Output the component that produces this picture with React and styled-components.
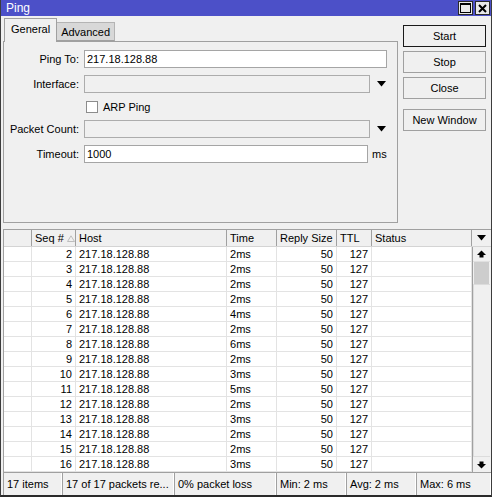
import React from "react";
import styled, { createGlobalStyle } from "styled-components";

const Global = createGlobalStyle`
  html, body { margin: 0; padding: 0; background: #f0f0f0; }
  body { font-family: "Liberation Sans", Arial, sans-serif; font-size: 11px; color: #000; }
  * { box-sizing: border-box; }
`;

const Window = styled.div`
  width: 492px;
  height: 497px;
  background: #f0f0f0;
  border-left: 1px solid #3c3c3c;
  border-right: 1px solid #3c3c3c;
  border-bottom: 2px solid #2a2a2a;
  display: flex;
  flex-direction: column;
  overflow: hidden;
`;

const TitleBar = styled.div`
  height: 16px;
  margin: 0 -1px;
  background: #4c50c8;
  color: #fff;
  font-size: 12px;
  display: flex;
  align-items: center;
  padding-left: 6px;
  padding-right: 2px;
`;

const TitleText = styled.div`
  flex: 1;
`;

const TitleButton = styled.div`
  width: 15px;
  height: 14px;
  margin-left: 2px;
  background: #e8e8e8;
  border: 1px solid #2a2a2a;
  display: flex;
  align-items: center;
  justify-content: center;
`;

const Upper = styled.div`
  display: flex;
  padding-left: 2px;
  margin-top: 2px;
`;

const LeftPart = styled.div`
  width: 395px;
  display: flex;
  flex-direction: column;
`;

const Tabs = styled.div`
  display: flex;
  align-items: flex-end;
  height: 23px;
  padding-left: 1px;
  position: relative;
  z-index: 1;
`;

const Tab = styled.div`
  height: ${(p) => (p.$active ? "24px" : "19px")};
  padding: 0 ${(p) => (p.$active ? "6px" : "4px")};
  background: ${(p) => (p.$active ? "#f0f0f0" : "#d8d8d8")};
  border: 1px solid ${(p) => (p.$active ? "#a0a0a0" : "#b4b4b4")};
  border-bottom: ${(p) => (p.$active ? "none" : "1px solid #a0a0a0")};
  border-left: ${(p) => (p.$active ? "1px solid #a0a0a0" : "none")};
  display: flex;
  align-items: ${(p) => (p.$active ? "flex-start" : "center")};
  padding-top: ${(p) => (p.$active ? "4px" : "0")};
  font-size: 11px;
  margin-bottom: ${(p) => (p.$active ? "-1px" : "0")};
`;

const Panel = styled.div`
  height: 182px;
  border: 1px solid #a0a0a0;
  padding-top: 8px;
  display: flex;
  flex-direction: column;
  gap: 7px;
`;

const FormRow = styled.div`
  display: flex;
  align-items: center;
  height: ${(p) => p.$h || 18}px;
`;

const Label = styled.div`
  width: 76px;
  text-align: right;
  padding-right: 1px;
  margin-right: 4px;
  white-space: nowrap;
`;

const Input = styled.div`
  width: ${(p) => p.$w}px;
  height: 18px;
  background: ${(p) => (p.$disabled ? "#f0f0f0" : "#fff")};
  border: 1px solid ${(p) => (p.$disabled ? "#acacac" : "#a5a5a5")};
  padding-left: 2px;
  display: flex;
  align-items: center;
`;

const DropArrow = styled.div`
  width: 18px;
  display: flex;
  justify-content: center;
  margin-left: 2px;
`;

const Unit = styled.div`
  margin-left: 4px;
`;

const Check = styled.div`
  width: 12px;
  height: 12px;
  background: #fff;
  border: 1px solid #8c8c8c;
  margin-left: 82px;
  margin-right: 5px;
`;

const ButtonCol = styled.div`
  margin-left: 5px;
  margin-top: 7px;
  width: 83px;
  display: flex;
  flex-direction: column;
  gap: 4px;
`;

const Button = styled.div`
  height: 22px;
  border: 1px solid ${(p) => (p.$default ? "#1a1a1a" : "#a0a0a0")};
  background: #f0f0f0;
  display: flex;
  align-items: center;
  justify-content: center;
  font-size: 11px;
  margin-top: ${(p) => p.$mt || 0}px;
`;

const Table = styled.div`
  margin-top: 6px;
  margin-left: 2px;
  display: flex;
  flex-direction: column;
  border-left: 1px solid #a0a0a0;
  border-top: 1px solid #a0a0a0;
`;

const cols = "28px 44px 151px 50px 60px 35px 100px";

const HeaderRow = styled.div`
  display: grid;
  grid-template-columns: ${cols} 18px;
  height: 17px;
  background: #f0f0f0;
  border-bottom: 1px solid #d4d4d4;
`;

const HeadCell = styled.div`
  border-right: 1px solid #a0a0a0;
  padding-left: 3px;
  display: flex;
  align-items: center;
  justify-content: ${(p) => (p.$center ? "center" : "flex-start")};
  white-space: nowrap;
`;

const SortMark = styled.svg`
  margin-left: 3px;
`;

const Body = styled.div`
  display: flex;
  height: 225px;
`;

const Rows = styled.div`
  width: 468px;
  background: #fff;
  display: flex;
  flex-direction: column;
`;

const Row = styled.div`
  display: grid;
  grid-template-columns: ${cols};
  height: 15px;
  border-bottom: 1px solid #e3e3e3;
`;

const Cell = styled.div`
  border-right: 1px solid #e3e3e3;
  padding: 0 3px;
  display: flex;
  align-items: center;
  justify-content: ${(p) => (p.$right ? "flex-end" : "flex-start")};
  white-space: nowrap;
  overflow: hidden;
  line-height: 14px;
`;

const ScrollBar = styled.div`
  width: 18px;
  border-left: 1px solid #a0a0a0;
  background: #f0f0f0;
  display: flex;
  flex-direction: column;
`;

const ScrollBtn = styled.div`
  height: 15px;
  display: flex;
  align-items: center;
  justify-content: center;
  background: #f0f0f0;
  border-bottom: ${(p) => (p.$top ? "1px solid #e0e0e0" : "none")};
`;

const Thumb = styled.div`
  height: 22px;
  background: #cdcdcd;
  margin: 0 1px;
`;

const Track = styled.div`
  flex: 1;
  border: 1px solid #dcdcdc;
  border-right: none;
`;

const StatusBar = styled.div`
  display: flex;
  height: 23px;
  margin-left: 2px;
  border-top: 1px solid #a0a0a0;
  border-left: 1px solid #a0a0a0;
`;

const StatusCell = styled.div`
  width: ${(p) => p.$w}px;
  padding-left: 3px;
  display: flex;
  align-items: center;
  border-right: 1px solid #a0a0a0;
  box-shadow: inset -1px 0 0 #fff;
  white-space: nowrap;
  overflow: hidden;
`;

const Down = ({ w = 9 }) => (
  <svg width={w} height="6" viewBox="0 0 9 6">
    <path d="M0 0 H9 L4.5 5.5 Z" fill="#000" />
  </svg>
);

const ArrowUp = () => (
  <svg width="9" height="8" viewBox="0 0 9 8">
    <path d="M0 5 L4.5 0.5 L9 5 Z" fill="#000" />
    <rect x="2.5" y="5" width="4" height="2.5" fill="#000" />
  </svg>
);

const ArrowDown = () => (
  <svg width="9" height="8" viewBox="0 0 9 8">
    <rect x="2.5" y="0.5" width="4" height="2.5" fill="#000" />
    <path d="M0 3 L9 3 L4.5 7.5 Z" fill="#000" />
  </svg>
);

const times = [2, 2, 2, 2, 4, 2, 6, 2, 3, 5, 2, 3, 2, 2, 3];

export default function App() {
  return (
    <>
      <Global />
      <Window>
        <TitleBar>
          <TitleText>Ping</TitleText>
          <TitleButton>
            <svg width="11" height="10" viewBox="0 0 11 10">
              <rect x="0.5" y="0.5" width="10" height="9" fill="none" stroke="#000" />
              <rect x="0.5" y="0.5" width="10" height="1.5" fill="#000" />
            </svg>
          </TitleButton>
          <TitleButton>
            <svg width="9" height="9" viewBox="0 0 9 9">
              <path d="M1 1 L8 8 M8 1 L1 8" stroke="#000" strokeWidth="2" />
            </svg>
          </TitleButton>
        </TitleBar>
        <Upper>
          <LeftPart>
            <Tabs>
              <Tab $active>General</Tab>
              <Tab>Advanced</Tab>
            </Tabs>
            <Panel>
              <FormRow>
                <Label>Ping To:</Label>
                <Input $w={303}>217.18.128.88</Input>
              </FormRow>
              <FormRow>
                <Label>Interface:</Label>
                <Input $w={286} $disabled />
                <DropArrow>
                  <Down />
                </DropArrow>
              </FormRow>
              <FormRow $h={13}>
                <Check />
                <span>ARP Ping</span>
              </FormRow>
              <FormRow>
                <Label>Packet Count:</Label>
                <Input $w={286} $disabled />
                <DropArrow>
                  <Down />
                </DropArrow>
              </FormRow>
              <FormRow>
                <Label>Timeout:</Label>
                <Input $w={284}>1000</Input>
                <Unit>ms</Unit>
              </FormRow>
            </Panel>
          </LeftPart>
          <ButtonCol>
            <Button $default>Start</Button>
            <Button>Stop</Button>
            <Button>Close</Button>
            <Button $mt={6}>New Window</Button>
          </ButtonCol>
        </Upper>
        <Table>
          <HeaderRow>
            <HeadCell />
            <HeadCell>
              Seq #
              <SortMark width="8" height="7" viewBox="0 0 8 7">
                <path d="M0.5 6.5 L4 0.8 L7.5 6.5 Z" fill="none" stroke="#bdbdbd" />
              </SortMark>
            </HeadCell>
            <HeadCell>Host</HeadCell>
            <HeadCell>Time</HeadCell>
            <HeadCell>Reply Size</HeadCell>
            <HeadCell>TTL</HeadCell>
            <HeadCell>Status</HeadCell>
            <HeadCell $center style={{ paddingLeft: 0, borderRight: "none" }}>
              <Down />
            </HeadCell>
          </HeaderRow>
          <Body>
            <Rows>
              {times.map((t, i) => (
                <Row key={i}>
                  <Cell />
                  <Cell $right>{i + 2}</Cell>
                  <Cell>217.18.128.88</Cell>
                  <Cell>{t}ms</Cell>
                  <Cell $right>50</Cell>
                  <Cell $right>127</Cell>
                  <Cell />
                </Row>
              ))}
            </Rows>
            <ScrollBar>
              <ScrollBtn $top>
                <ArrowUp />
              </ScrollBtn>
              <Thumb />
              <Track />
              <ScrollBtn>
                <ArrowDown />
              </ScrollBtn>
            </ScrollBar>
          </Body>
        </Table>
        <StatusBar>
          <StatusCell $w={59}>17 items</StatusCell>
          <StatusCell $w={112}>17 of 17 packets re...</StatusCell>
          <StatusCell $w={102}>0% packet loss</StatusCell>
          <StatusCell $w={70}>Min: 2 ms</StatusCell>
          <StatusCell $w={70}>Avg: 2 ms</StatusCell>
          <StatusCell $w={74} style={{ borderRight: "none" }}>
            Max: 6 ms
          </StatusCell>
        </StatusBar>
      </Window>
    </>
  );
}
